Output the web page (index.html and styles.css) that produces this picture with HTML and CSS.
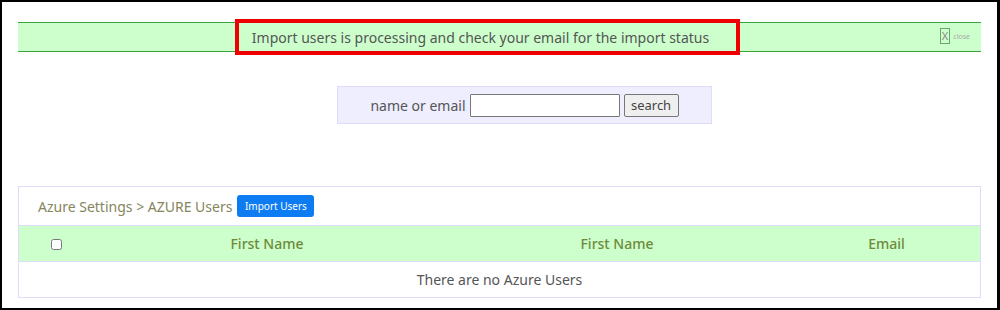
FILE: index.html
```html
<!DOCTYPE html>
<html lang="en">
<head>
    <meta charset="UTF-8">
    <title>Azure Users</title>
    <link rel="stylesheet" href="styles.css">
</head>
<body>
    <div class="frame">
        <div class="notice">
            <span class="notice-text">Import users is processing and check your email for the import status</span>
            <span class="notice-close"><span class="close-x">X</span><span class="close-label">close</span></span>
        </div>

        <form class="search-box">
            <label for="q">name or email</label>
            <input type="text" id="q" class="search-input">
            <button type="button" class="search-btn">search</button>
        </form>

        <div class="panel">
            <div class="panel-head">
                <span class="crumbs">Azure Settings &gt; AZURE Users</span>
                <button type="button" class="btn-import">Import Users</button>
            </div>
            <table class="users">
                <thead>
                    <tr>
                        <th class="col-check"><input type="checkbox"></th>
                        <th class="col-first">First Name</th>
                        <th class="col-last">First Name</th>
                        <th>Email</th>
                    </tr>
                </thead>
                <tbody>
                    <tr>
                        <td colspan="4" class="empty">There are no Azure Users</td>
                    </tr>
                </tbody>
            </table>
        </div>
    </div>
</body>
</html>
```

FILE: styles.css
```css
html, body {
    margin: 0;
    padding: 0;
    background: #fff;
}

body {
    font-family: 'Noto Sans', 'Open Sans', sans-serif;
    color: #555;
}

.frame {
    box-sizing: border-box;
    width: 1000px;
    height: 310px;
    border: 2px solid #000;
    border-right-width: 3px;
    padding: 20px 16px 0 16px;
    overflow: hidden;
}

.notice {
    position: relative;
    height: 28px;
    background: #ccffcc;
    border-top: 1px solid #3aa53a;
    border-bottom: 1px solid #3aa53a;
    display: flex;
    align-items: center;
    justify-content: center;
    font-size: 14px;
}

.notice-text {
    box-sizing: border-box;
    height: 36px;
    margin-left: -24px;
    padding: 0 27px 0 13px;
    border: 4px solid #e00;
    display: flex;
    align-items: center;
    color: #555;
}

.notice-close {
    position: absolute;
    right: 11px;
    top: 5px;
    display: flex;
    align-items: center;
    color: #999;
}

.close-x {
    border: 1px solid #6a6;
    font-size: 11px;
    line-height: 14px;
    padding: 0 1px;
    color: #888;
}

.close-label {
    font-size: 7px;
    margin-left: 3px;
    color: #aaa;
}

.search-box {
    box-sizing: border-box;
    width: 375px;
    height: 38px;
    margin: 34px 0 0 319px;
    background: #eeeeff;
    border: 1px solid #ddddfa;
    display: flex;
    align-items: center;
    justify-content: center;
    font-size: 14px;
}

.search-box label {
    color: #555;
    margin-right: 4px;
}

.search-input {
    box-sizing: border-box;
    width: 150px;
    height: 23px;
    border: 1px solid #777;
    border-radius: 1px;
    margin: 0 4px 0 0;
    padding: 0 4px;
}

.search-btn {
    box-sizing: border-box;
    height: 23px;
    width: 55px;
    padding: 0;
    font-family: inherit;
    font-size: 13px;
    color: #444;
    background: #efefef;
    border: 1px solid #777;
    border-radius: 2px;
}

.panel {
    margin-top: 62px;
    border: 1px solid #ddddfa;
}

.panel-head {
    height: 38px;
    display: flex;
    align-items: center;
    padding-left: 19px;
    border-bottom: 1px solid #ddddfa;
}

.crumbs {
    font-size: 14px;
    color: #85855e;
    margin-right: 5px;
}

.btn-import {
    height: 22px;
    width: 77px;
    padding: 0;
    border: none;
    border-radius: 3px;
    background: #0d7cf2;
    color: #fff;
    font-family: inherit;
    font-size: 10px;
    cursor: pointer;
}

.users {
    width: 100%;
    border-collapse: collapse;
}

.users th {
    height: 35px;
    background: #ccffcc;
    color: #6f8a3a;
    font-weight: 500;
    font-size: 14px;
    border-bottom: 1px solid #ddddfa;
    padding: 0;
}

.users th.col-check {
    width: 74px;
    vertical-align: top;
    padding-top: 9px;
    box-sizing: border-box;
    height: 35px;
}

.col-check input {
    margin: 0;
    width: 11px;
    height: 11px;
}

.col-first {
    width: 348px;
}

.col-last {
    width: 352px;
}

.empty {
    height: 35px;
    text-align: center;
    font-size: 14px;
    color: #555;
    padding: 0;
}
```
